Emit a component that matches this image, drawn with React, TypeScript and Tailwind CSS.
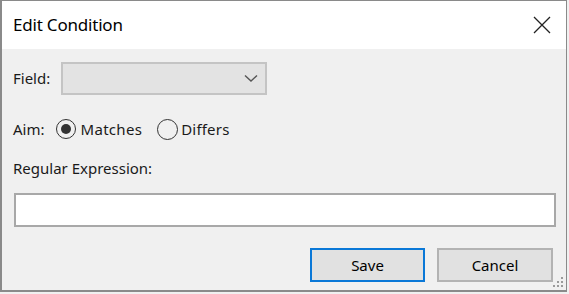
import React from "react";

export default function App() {
  return (
    <div className="w-[569px] h-[294px] bg-[#f0f0f0] overflow-hidden" style={{ fontFamily: '"Noto Sans", sans-serif' }}>
      <div className="w-[567px] h-[292px] border-l-2 border-t border-r border-b-2 border-[#8a8a8a] flex flex-col relative">
        <div className="h-[48px] bg-white flex items-center justify-between pl-[11px] pr-[14px] shrink-0">
          <span className="text-[17px] text-black tracking-[-0.2px]">Edit Condition</span>
          <svg width="18" height="18" viewBox="0 0 18 18" className="mr-[1px]">
            <path d="M1 1 L17 17 M17 1 L1 17" stroke="#222" strokeWidth="1.3" />
          </svg>
        </div>
        <div className="flex-1 bg-[#f0f0f0] pl-[11px] text-[15px] text-[#1a1a1a]">
          <div className="flex items-center mt-[13px] h-[33px]">
            <span className="w-[48px]">Field:</span>
            <div className="w-[206px] h-[33px] border-2 border-[#c4c4c4] bg-[#e3e3e3] flex items-center justify-end pr-[7px]">
              <svg width="14" height="9" viewBox="0 0 14 9">
                <path d="M1 1.5 L7 7 L13 1.5" stroke="#555" strokeWidth="1.4" fill="none" />
              </svg>
            </div>
          </div>
          <div className="flex items-center mt-[22px] h-[24px]">
            <span className="mr-[11px]">Aim:</span>
            <span className="w-[20px] h-[20px] rounded-full border-[1.5px] border-[#333] flex items-center justify-center">
              <span className="w-[10px] h-[10px] rounded-full bg-[#333]" />
            </span>
            <span className="ml-[5px] tracking-[0.3px]">Matches</span>
            <span className="ml-[15px] w-[21px] h-[21px] rounded-full border-[1.5px] border-[#333]" />
            <span className="ml-[3px] tracking-[0.2px]">Differs</span>
          </div>
          <div className="mt-[17px] h-[20px] flex items-center">Regular Expression:</div>
          <div className="mt-[15px] w-[542px] ml-[1px] h-[34px] border-2 border-[#a8a8a8] bg-white" />
          <div className="flex justify-end gap-[12px] mt-[21px] pr-[13px]">
            <button className="w-[115px] h-[34px] border-2 border-[#0a78d7] bg-[#e1e1e1] text-[15px] text-black">Save</button>
            <button className="w-[116px] h-[34px] border-2 border-[#b3b3b3] bg-[#e1e1e1] text-[15px] text-black">Cancel</button>
          </div>
        </div>
        <svg className="absolute right-[1px] bottom-[1px]" width="12" height="12" viewBox="0 0 12 12">
          <rect x="8" y="0" width="2" height="2" fill="#9a9a9a" />
          <rect x="4" y="4" width="2" height="2" fill="#9a9a9a" />
          <rect x="8" y="4" width="2" height="2" fill="#9a9a9a" />
          <rect x="0" y="8" width="2" height="2" fill="#9a9a9a" />
          <rect x="4" y="8" width="2" height="2" fill="#9a9a9a" />
          <rect x="8" y="8" width="2" height="2" fill="#9a9a9a" />
        </svg>
      </div>
    </div>
  );
}
